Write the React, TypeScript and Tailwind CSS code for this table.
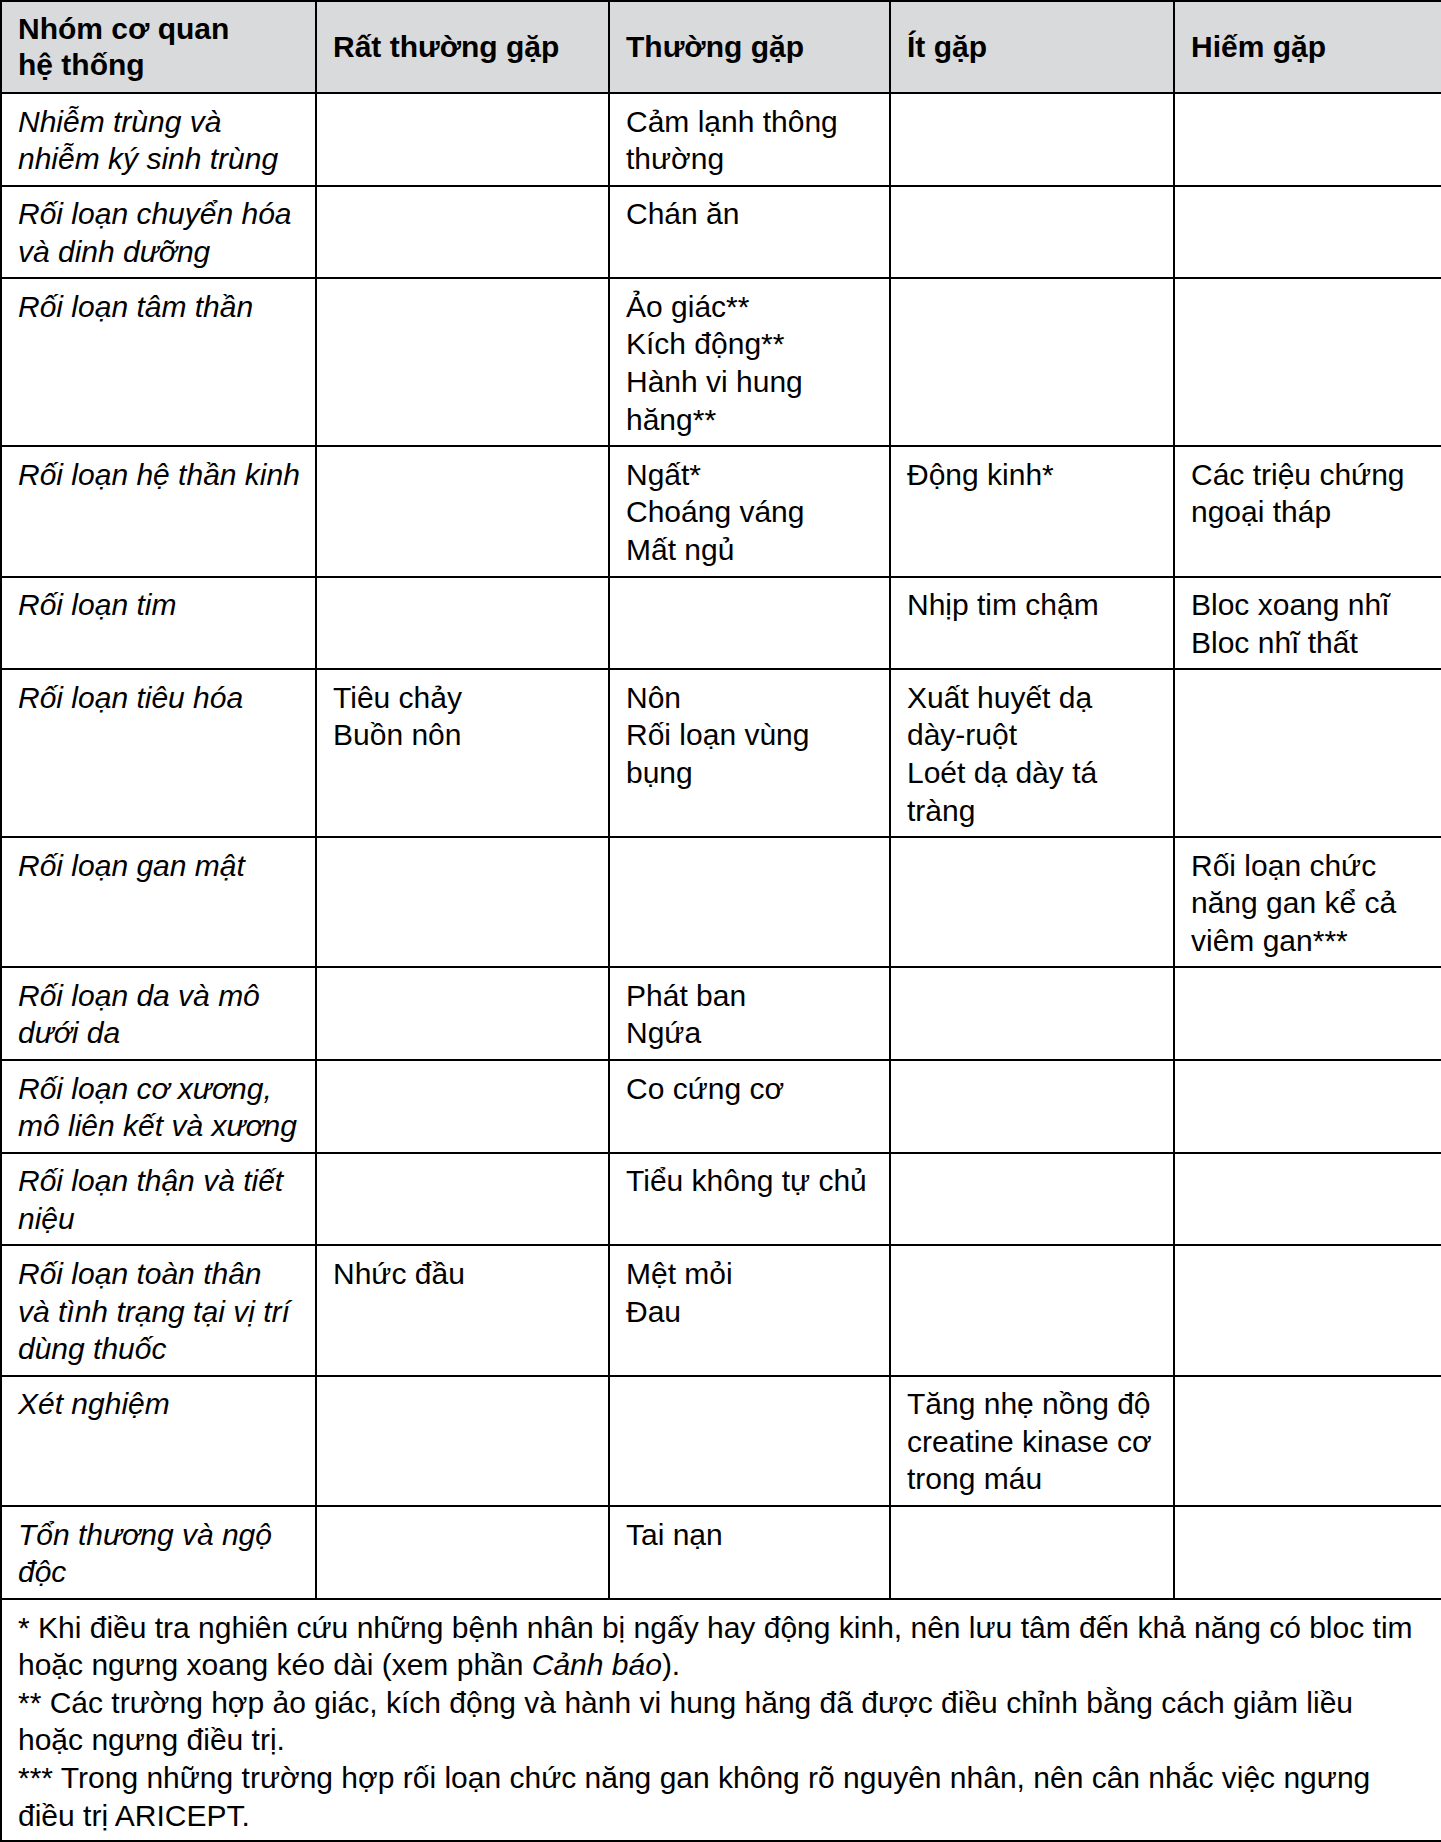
import React from "react";

type Row = { g: string[]; c: string[][] };

const rows: Row[] = [
  { g: ["Nhiễm trùng và", "nhiễm ký sinh trùng"], c: [[], ["Cảm lạnh thông", "thường"], [], []] },
  { g: ["Rối loạn chuyển hóa", "và dinh dưỡng"], c: [[], ["Chán ăn"], [], []] },
  { g: ["Rối loạn tâm thần"], c: [[], ["Ảo giác**", "Kích động**", "Hành vi hung", "hăng**"], [], []] },
  {
    g: ["Rối loạn hệ thần kinh"],
    c: [[], ["Ngất*", "Choáng váng", "Mất ngủ"], ["Động kinh*"], ["Các triệu chứng", "ngoại tháp"]],
  },
  { g: ["Rối loạn tim"], c: [[], [], ["Nhịp tim chậm"], ["Bloc xoang nhĩ", "Bloc nhĩ thất"]] },
  {
    g: ["Rối loạn tiêu hóa"],
    c: [
      ["Tiêu chảy", "Buồn nôn"],
      ["Nôn", "Rối loạn vùng", "bụng"],
      ["Xuất huyết dạ", "dày-ruột", "Loét dạ dày tá", "tràng"],
      [],
    ],
  },
  { g: ["Rối loạn gan mật"], c: [[], [], [], ["Rối loạn chức", "năng gan kể cả", "viêm gan***"]] },
  { g: ["Rối loạn da và mô", "dưới da"], c: [[], ["Phát ban", "Ngứa"], [], []] },
  { g: ["Rối loạn cơ xương,", "mô liên kết và xương"], c: [[], ["Co cứng cơ"], [], []] },
  { g: ["Rối loạn thận và tiết", "niệu"], c: [[], ["Tiểu không tự chủ"], [], []] },
  {
    g: ["Rối loạn toàn thân", "và tình trạng tại vị trí", "dùng thuốc"],
    c: [["Nhức đầu"], ["Mệt mỏi", "Đau"], [], []],
  },
  { g: ["Xét nghiệm"], c: [[], [], ["Tăng nhẹ nồng độ", "creatine kinase cơ", "trong máu"], []] },
  { g: ["Tổn thương và ngộ", "độc"], c: [[], ["Tai nạn"], [], []] },
];

function Lines({ lines }: { lines: string[] }) {
  return (
    <>
      {lines.map((l, i) => (
        <div key={i} className="whitespace-nowrap">
          {l}
        </div>
      ))}
    </>
  );
}

export default function App() {
  return (
    <div className="w-[1441px] h-[1842px] bg-white text-black font-['Liberation_Sans',Arial,sans-serif] text-[30px] leading-[37.6px]">
      <table className="w-[1441px] table-fixed border-collapse">
        <colgroup>
          <col className="w-[315px]" />
          <col className="w-[293px]" />
          <col className="w-[281px]" />
          <col className="w-[284px]" />
          <col className="w-[268px]" />
        </colgroup>
        <thead>
          <tr className="bg-[#d9dadc]">
            <th className="border-2 border-black h-[92px] px-4 text-left align-middle font-bold leading-[36.5px]">
              <div>Nhóm cơ quan</div>
              <div>hệ thống</div>
            </th>
            <th className="border-2 border-black px-4 text-left align-middle font-bold">Rất thường gặp</th>
            <th className="border-2 border-black px-4 text-left align-middle font-bold">Thường gặp</th>
            <th className="border-2 border-black px-4 text-left align-middle font-bold">Ít gặp</th>
            <th className="border-2 border-black px-4 text-left align-middle font-bold">Hiếm gặp</th>
          </tr>
        </thead>
        <tbody>
          {rows.map((r, i) => (
            <tr key={i}>
              <td className="border-2 border-black px-4 pt-[8.5px] pb-[7px] align-top italic">
                <Lines lines={r.g} />
              </td>
              {r.c.map((c, j) => (
                <td key={j} className="border-2 border-black px-4 pt-[8.5px] pb-[7px] align-top">
                  <Lines lines={c} />
                </td>
              ))}
            </tr>
          ))}
          <tr>
            <td colSpan={5} className="border-2 border-black px-4 pt-[9px] pb-[6px] align-top">
              <div className="whitespace-nowrap">
                * Khi điều tra nghiên cứu những bệnh nhân bị ngấy hay động kinh, nên lưu tâm đến khả năng có bloc tim
              </div>
              <div className="whitespace-nowrap">
                hoặc ngưng xoang kéo dài (xem phần <span className="italic">Cảnh báo</span>).
              </div>
              <div className="whitespace-nowrap">
                ** Các trường hợp ảo giác, kích động và hành vi hung hăng đã được điều chỉnh bằng cách giảm liều
              </div>
              <div className="whitespace-nowrap">hoặc ngưng điều trị.</div>
              <div className="whitespace-nowrap">
                *** Trong những trường hợp rối loạn chức năng gan không rõ nguyên nhân, nên cân nhắc việc ngưng
              </div>
              <div className="whitespace-nowrap">điều trị ARICEPT.</div>
            </td>
          </tr>
        </tbody>
      </table>
    </div>
  );
}
